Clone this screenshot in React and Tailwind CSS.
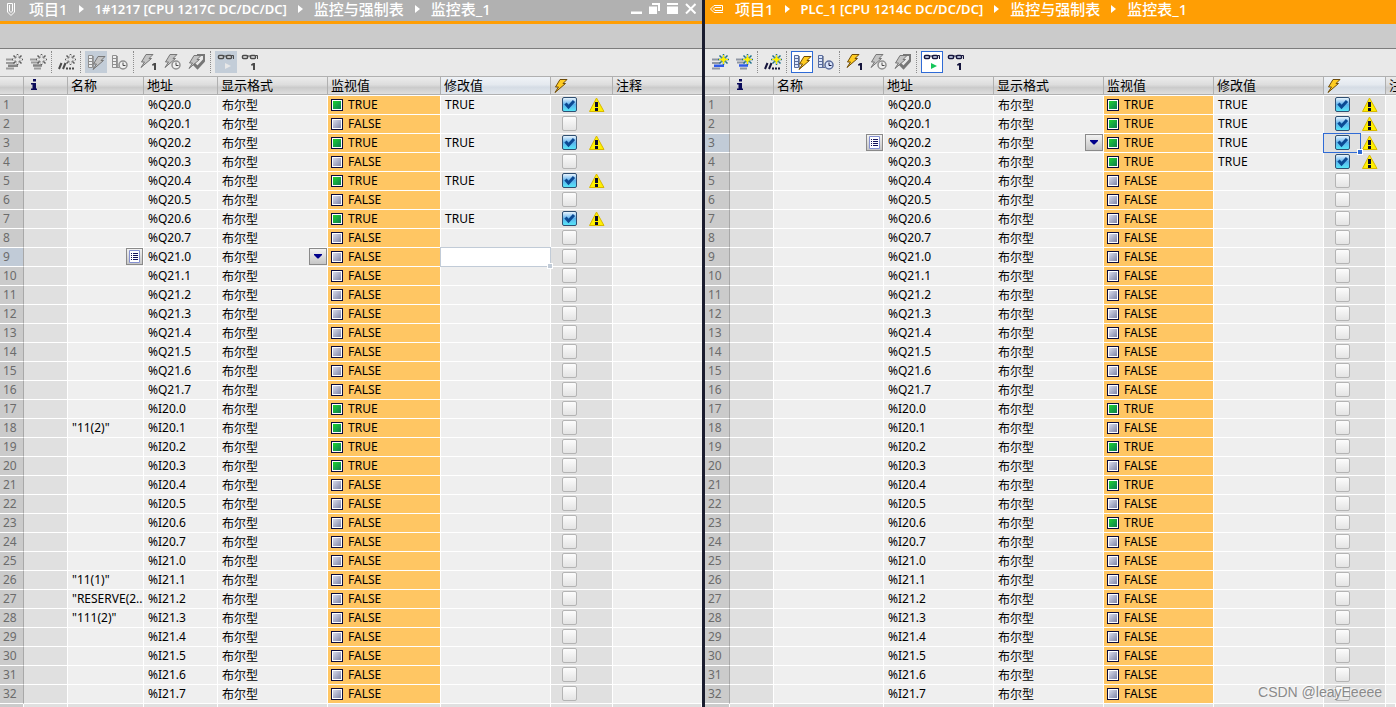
import React, { useState } from "react";
import clsx from "clsx";

const FONT = "font-['Noto_Sans','Noto_Sans_CJK_SC',sans-serif]";

const ADDRESSES = ["Q20", "Q21", "I20", "I21"].flatMap((base) =>
  [0, 1, 2, 3, 4, 5, 6, 7].map((bit) => `%${base}.${bit}`)
);

const makeRows = ({ on, forced, names = {} }) =>
  ADDRESSES.map((address, i) => ({
    no: i + 1,
    name: names[i + 1] || "",
    address,
    value: on.includes(i + 1),
    forced: forced.includes(i + 1),
  }));

const PANELS = [
  {
    id: "a",
    active: false,
    path: ["项目1", "1#1217 [CPU 1217C DC/DC/DC]", "监控与强制表", "监控表_1"],
    cols: ["w-6", "w-11", "w-[76px]", "w-[74px]", "w-[110px]", "w-[113px]", "w-[110px]", "w-[62px]", ""],
    hotColumn: 6,
    selected: { row: 9, column: "modify" },
    rows: makeRows({
      on: [1, 3, 5, 7, 17, 18, 19, 20],
      forced: [1, 3, 5, 7],
      names: { 18: '"11(2)"', 26: '"11(1)"', 27: '"RESERVE(2..', 28: '"111(2)"' },
    }),
  },
  {
    id: "b",
    active: true,
    path: ["项目1", "PLC_1 [CPU 1214C DC/DC/DC]", "监控与强制表", "监控表_1"],
    cols: ["w-[25px]", "w-11", "w-[110px]", "w-[110px]", "w-[110px]", "w-[110px]", "w-[110px]", "w-[62px]", ""],
    hotColumn: 7,
    selected: { row: 3, column: "force" },
    rows: makeRows({ on: [1, 2, 3, 4, 17, 19, 21, 23], forced: [1, 2, 3, 4] }),
  },
];

const GREY = { bar: "#9c9c9c", barHot: "#868686", star: "#e4e4e4", spike: "#5c5c5c", ink: "#4a4a4a", bolt: "#c4c4c4", boltEdge: "#777777", rule: "#8f8f8f", face: "#efefef", play: "#e8e8e8" };
const COLOR = { bar: "#8f96a3", barHot: "#2f5bea", star: "#fff000", spike: "#1f6f8a", ink: "#14143c", bolt: "#ffcc22", boltEdge: "#6e4b08", rule: "#5a6c9c", face: "#dbe6fb", play: "#16c65a" };

/* ---------- icons ---------- */

function Glyph({ children }) {
  return <svg width="20" height="20" viewBox="0 0 20 20" fill="none" aria-hidden="true">{children}</svg>;
}

function Star({ c, x = 13, y = 7 }) {
  return (
    <g transform={`translate(${x} ${y})`}>
      <path d="M.5-5V6M-5 .5H6M-3.500-3.500L4.500 4.500M-3.500 4.500L4.500-3.500" stroke={c.spike} strokeWidth="1.500" />
      <path d="M.5-4V5M-4 .5H5" stroke={c.star} strokeWidth="1" />
      <path d="M-1.500-1.500H2.500V2.500H-1.500Z" fill={c.star} />
    </g>
  );
}

function Bolt({ c, x = 0, y = 0 }) {
  return (
    <path transform={`translate(${x} ${y})`} d="M6 .5H13L9 4.500H11.500L1 13.500L4.500 8H1.500Z"
          fill={c.bolt} stroke={c.boltEdge} strokeLinejoin="round" />
  );
}

function One({ c, x, y }) {
  return <path transform={`translate(${x} ${y})`} d="M0 1.500L2 0H4V7H2V2.500H0Z" fill={c.ink} />;
}

function Clock({ c, x, y }) {
  return (
    <g transform={`translate(${x} ${y})`} stroke={c.rule}>
      <circle r="4" fill={c.face} strokeWidth="1.500" />
      <path d="M0-2.500V.5H2.500" stroke={c.ink} />
    </g>
  );
}

function Ruler({ c }) {
  return (
    <g>
      <path d="M2.500 3.500H6.500V15.500H2.500Z" fill={c.face} stroke={c.rule} />
      <path d="M3 6.500H6M3 9.500H6M3 12.500H6" stroke={c.rule} />
      <path d="M7.500 4V16" stroke={c.bar} />
    </g>
  );
}

function Glasses({ c, y = 0 }) {
  return (
    <g transform={`translate(0 ${y})`} stroke={c.ink}>
      <rect x="2.500" y="4.500" width="5" height="3" rx="1" fill={c.face} strokeWidth="1.500" />
      <rect x="10.500" y="4.500" width="5" height="3" rx="1" fill={c.face} strokeWidth="1.500" />
      <path d="M7 5H11M15.500 4.500H17.500V8" />
    </g>
  );
}

const TOOLS = [
  {
    label: "插入行",
    draw: (c) => (
      <>
        <path d="M2 7.500H9M2 11H10M2 16.500H10" stroke={c.bar} strokeWidth="2" />
        <path d="M4 13.750H14" stroke={c.barHot} strokeWidth="2.500" />
        <Star c={c} />
      </>
    ),
  },
  {
    label: "添加行",
    draw: (c) => (
      <>
        <path d="M2 7.500H9M3 10.500H11M6 16.500H13" stroke={c.bar} strokeWidth="2" />
        <path d="M5 13.500H14" stroke={c.barHot} strokeWidth="2.500" />
        <Star c={c} />
      </>
    ),
  },
  null,
  {
    label: "插入注释行",
    draw: (c) => (
      <>
        <path d="M2 17L4.500 11M6 17L8.500 11" stroke={c.ink} strokeWidth="2" />
        <path d="M9 16.500H11M12 16.500H14M15 16.500H17" stroke={c.ink} strokeWidth="2" />
        <Star c={c} />
      </>
    ),
  },
  null,
  { label: "显示修改列", pressed: true, draw: (c) => <><Ruler c={c} /><Bolt c={c} x={6} y={4} /></> },
  { label: "扩展模式", draw: (c) => <><Ruler c={c} /><path d="M3 15.500H9" stroke={c.rule} /><Clock c={c} x={13} y={13} /></> },
  null,
  { label: "立即修改一次", draw: (c) => <><Bolt c={c} x={1} y={2} /><One c={c} x={13} y={11} /></> },
  { label: "使用触发器修改", muted: true, draw: (c) => <><Bolt c={c} x={1} y={2} /><Clock c={c} x={13} y={13} /></> },
  {
    label: "启用外围设备输出",
    muted: true,
    draw: (c) => (
      <>
        <path d="M10 3H17V9" stroke={c.boltEdge} strokeWidth="2" />
        <Bolt c={c} x={1} y={3} />
        <path d="M7 12L10.500 15.500L17 8.500" stroke={c.boltEdge} strokeWidth="3" />
      </>
    ),
  },
  null,
  { label: "全部监视", pressed: true, draw: (c) => <><Glasses c={c} y={-1} /><path d="M9 11L15 14L9 17Z" fill={c.play} /></> },
  { label: "立即监视一次", draw: (c) => <><Glasses c={c} y={-1} /><One c={c} x={11} y={11} /></> },
];

function Clip({ active }) {
  return (
    <svg width="16" height="16" viewBox="0 0 16 16" fill="none" stroke="#fff" aria-hidden="true">
      <path transform={active ? "rotate(90 8 8)" : undefined}
            d="M11.500 2V11L8 14.500L4.500 11V2.500H9.500V10L8 11.500L6.500 10V4" />
    </svg>
  );
}

function Warning() {
  return (
    <svg width="16" height="16" viewBox="0 0 16 16" role="img" aria-label="警告">
      <path d="M7.500 1L15 14.500H.5Z" fill="#fff000" stroke="#d8b800" strokeLinejoin="round" />
      <path d="M6 5H9V10H6ZM6 11H9V14H6Z" fill="#0a0a28" />
    </svg>
  );
}

/* ---------- title + toolbar ---------- */

const WINDOW_BUTTONS = [
  ["最小化", <path key="p" d="M0 8.500H11V11H0Z" fill="#fff" />],
  ["还原", <path key="p" d="M3 0H11V8H9V2H3ZM0 3.500H8V11H0Z" fill="#fff" />],
  ["最大化", <path key="p" d="M0 0H11V2H0ZM0 3.500H11V11H0Z" fill="#fff" />],
  ["关闭", <path key="p" d="M1 1L10.500 10.500M10.500 1L1 10.500" stroke="#fff" strokeWidth="2" />],
];

function TitleBar({ path, active }) {
  return (
    <header className={clsx(
      "flex h-6 items-start border-b-[3px] border-[#ff9e04] pr-1.5 text-white",
      active ? "bg-[#ff9e04] pl-1" : "bg-[#b1b1b1] pl-[3px]"
    )}>
      <div className="mt-px"><Clip active={active} /></div>
      <nav className="ml-[10px] flex flex-1 items-center whitespace-nowrap text-[15px] leading-[18px]">
        {path.map((part, i) => (
          <React.Fragment key={part}>
            {i > 0 && (
              <svg className="mr-[11px] ml-[11px]" width="5" height="8" viewBox="0 0 5 8" aria-hidden="true">
                <path d="M0 0L5 4L0 8Z" fill="#fff" />
              </svg>
            )}
            <span className={i === 1 ? "text-[13px] leading-[18px] font-semibold" : "font-medium"}>{part}</span>
          </React.Fragment>
        ))}
      </nav>
      {!active && (
        <div className="mt-[3px] flex gap-[7px]">
          {WINDOW_BUTTONS.map(([label, shape]) => (
            <button key={label} type="button" aria-label={label}>
              <svg width="11" height="11" viewBox="0 0 11 11">{shape}</svg>
            </button>
          ))}
        </div>
      )}
    </header>
  );
}

function Toolbar({ active }) {
  return (
    <div className={clsx("flex h-[27px] items-start gap-0.5 bg-[#e9e9e9] pt-0.5", active ? "pl-1" : "pl-[3px]")}>
      {TOOLS.map((tool, i) =>
        tool === null ? (
          <span key={i} className="h-[22px] w-[3px] border-l border-dotted border-[#8c8c8c]" />
        ) : (
          <button key={i} type="button" aria-label={tool.label} aria-pressed={!!tool.pressed}
                  className={clsx(
                    "flex h-[22px] w-[22px] items-center justify-center",
                    tool.pressed && (active ? "border border-[#2f6bd6] bg-white" : "bg-[#c3cdd8]")
                  )}>
            <Glyph>{tool.draw(active && !tool.muted ? COLOR : GREY)}</Glyph>
          </button>
        )
      )}
    </div>
  );
}

/* ---------- watch table ---------- */

function Led({ on }) {
  return (
    <span className="h-3 w-3 shrink-0 border border-[#0a0a3c] bg-white p-px">
      <span className={clsx(
        "block h-full w-full bg-linear-to-br",
        on ? "from-[#1fd41f] to-[#0f7c4c]" : "from-[#d8daea] to-[#8086a8]"
      )} />
    </span>
  );
}

function ForceBox({ id, checked, onChange }) {
  return (
    <span className="relative h-[15px] w-[15px]">
      <input id={id} type="checkbox" aria-label="修改" checked={checked} onChange={onChange}
             className={clsx(
               "block h-[15px] w-[15px] appearance-none rounded-[2px] border",
               checked
                 ? "border-[#2f4f72] bg-linear-to-b from-[#e8f4fd] via-[#5cb2ec] to-[#56e6f8]"
                 : "border-[#b4b4b4] bg-linear-to-b from-[#fcfcfc] to-[#e4e4e4]"
             )} />
      {checked && (
        <svg className="pointer-events-none absolute inset-0" width="15" height="15" viewBox="0 0 15 15" fill="none">
          <path d="M3.500 6.500L6.500 10L12 4" stroke="#0b4a94" strokeWidth="3" />
        </svg>
      )}
    </span>
  );
}

const cellButton = "ml-auto flex h-[17px] items-center justify-center self-start border border-[#8a8a8a] bg-linear-to-b from-[#f2f2f2] to-[#c6c6c6]";

const td = "relative h-[19px] border-r border-b border-white p-0";
const inner = "flex h-[18px] items-center overflow-hidden whitespace-nowrap";

function Row({ row, panel, checked, onToggle }) {
  const isCurrent = panel.selected.row === row.no;
  const selected = isCurrent ? panel.selected.column : null;
  return (
    <tr className="bg-[#efefef]">
      <th scope="row" className={clsx(
        "h-[19px] border-r border-b border-r-[#a8a8a8] border-b-white p-0 font-normal text-[#6c6c6c]",
        isCurrent ? "bg-[#c1cbd7]" : "bg-[#cbcbcb]"
      )}>
        <div className={clsx(inner, "pl-[3px]")}>{row.no}</div>
      </th>
      <td className={clsx(td, "bg-[#e0e0e0]")} />
      <td className={td}>
        <div className={clsx(inner, "pl-1")}>
          {row.name}
          {isCurrent && (
            <button type="button" aria-label="选择变量" className={clsx(cellButton, "w-[17px]")}>
              <svg width="11" height="13" viewBox="0 0 11 13">
                <path d="M.5 .5H10.500V12.500H.5Z" fill="#fff" stroke="#8490d0" />
                <path d="M2 3.500H3M4 3.500H9M2 5.500H3M4 5.500H9M2 7.500H3M4 7.500H9M2 9.500H3M4 9.500H9" stroke="#14145a" />
              </svg>
            </button>
          )}
        </div>
      </td>
      <td className={td}><div className={clsx(inner, "pl-1")}>{row.address}</div></td>
      <td className={td}>
        <div className={clsx(inner, "pl-1")}>
          <span className="pt-0.5">布尔型</span>
          {isCurrent && (
            <button type="button" aria-label="选择显示格式" className={clsx(cellButton, "w-[18px]")}>
              <svg width="8" height="5" viewBox="0 0 8 5"><path d="M0 0H8V1L4.500 4.500H3.500L0 1Z" fill="#00008b" /></svg>
            </button>
          )}
        </div>
      </td>
      <td className={clsx(td, "bg-[#ffc663]")}>
        <div className={clsx(inner, "gap-[5px] pl-[3px]")}>
          <Led on={row.value} />
          {row.value ? "TRUE" : "FALSE"}
        </div>
      </td>
      <td className={td}>
        <div className={clsx(inner, "pl-1")}>{row.forced && "TRUE"}</div>
        {selected === "modify" && (
          <>
            <input type="text" aria-label="修改值"
                   className="absolute -top-px -left-px z-10 h-5 w-[calc(100%+2px)] border border-[#c1cbd7] bg-white px-1 outline-none" />
            <span className="absolute -right-0.5 -bottom-0.5 z-20 h-1 w-1 bg-[#c1cbd7] outline outline-white" />
          </>
        )}
      </td>
      <td className={clsx(td, "bg-[#e0e0e0]")}>
        <div className="flex h-[18px] items-start gap-3 overflow-hidden pt-px pl-[11px]">
          <ForceBox id={`${panel.id}-${row.no}`} checked={checked} onChange={onToggle} />
          {row.forced && <Warning />}
        </div>
        {selected === "force" && (
          <>
            <span className="pointer-events-none absolute -top-px -left-px z-10 h-5 w-[38px] border border-[#2f6bd6]" />
            <span className="absolute -bottom-0.5 left-[34px] z-20 h-1 w-1 bg-[#2f6bd6] outline outline-white" />
          </>
        )}
      </td>
      <td className={clsx(td, "border-r-0")} />
    </tr>
  );
}

const HEADERS = [
  "",
  <svg key="i" width="6" height="11" viewBox="0 0 6 11" className="ml-[2px]" role="img" aria-label="信息">
    <path d="M2 0H5V2.500H2ZM0 4H5V9.500H6V11H0V9.500H1.500V5.500H0Z" fill="#0a0a5a" />
  </svg>,
  "名称",
  "地址",
  "显示格式",
  "监视值",
  "修改值",
  <svg key="b" width="14" height="14" viewBox="0 0 14 14" className="-ml-0.5" role="img" aria-label="修改">
    <Bolt c={COLOR} />
  </svg>,
  "注释",
];

function WatchTable({ panel }) {
  const [forced, setForced] = useState(() => panel.rows.map((r) => r.forced));
  const toggle = (i) => setForced((prev) => prev.map((v, k) => (k === i ? !v : v)));

  return (
    <table className="w-full table-fixed border-separate border-spacing-0 text-left text-xs leading-[18px] text-black">
      <colgroup>
        {panel.cols.map((w, i) => <col key={i} className={w} />)}
      </colgroup>
      <thead>
        <tr>
          {HEADERS.map((h, i) => (
            <th key={i} scope="col" className="h-5 border-b border-white p-0 text-[13px] leading-4 font-normal">
              <div className={clsx(
                "flex h-[19px] items-start overflow-hidden border-y border-[#b0b0b0] whitespace-nowrap",
                i < 8 && "border-r",
                typeof h === "string" ? "pl-[3px]" : "pt-0.5 pl-[5px]",
                i === panel.hotColumn
                  ? "bg-[linear-gradient(#f0f3f7,#e4e9ef_45%,#d5dce5_60%,#e2e7ed)]"
                  : "bg-[linear-gradient(#ececec,#dddddd_45%,#cbcbcb_62%,#dedede)]"
              )}>
                {h}
              </div>
            </th>
          ))}
        </tr>
      </thead>
      <tbody>
        {panel.rows.map((row, i) => (
          <Row key={row.no} row={row} panel={panel} checked={forced[i]} onToggle={() => toggle(i)} />
        ))}
        <tr>
          {panel.cols.map((_, i) => (
            <td key={i} className={clsx(td, i === 0 ? "bg-[#cbcbcb]" : "bg-[#e0e0e0]")} />
          ))}
        </tr>
      </tbody>
    </table>
  );
}

function Panel({ panel }) {
  return (
    <section className="min-w-0 overflow-hidden bg-[#efefef]">
      <TitleBar path={panel.path} active={panel.active} />
      <div className="h-[25px] border-b border-[#7d7d7d] bg-[#cbcbcb]" />
      <Toolbar active={panel.active} />
      <WatchTable panel={panel} />
    </section>
  );
}

export default function App() {
  return (
    <main className={clsx(
      "relative grid h-screen grid-cols-[702fr_3px_691fr] overflow-hidden bg-[#1a1c2e]",
      FONT
    )}>
      <Panel panel={PANELS[0]} />
      <div />
      <Panel panel={PANELS[1]} />
      <span className="pointer-events-none absolute right-[14px] bottom-1 z-30 font-['Liberation_Sans',sans-serif] text-sm leading-[22px] text-[#8a8a8a] [text-shadow:-1px_-1px_0_#ffffffaa]">
        CSDN @leayEeeee
      </span>
    </main>
  );
}
